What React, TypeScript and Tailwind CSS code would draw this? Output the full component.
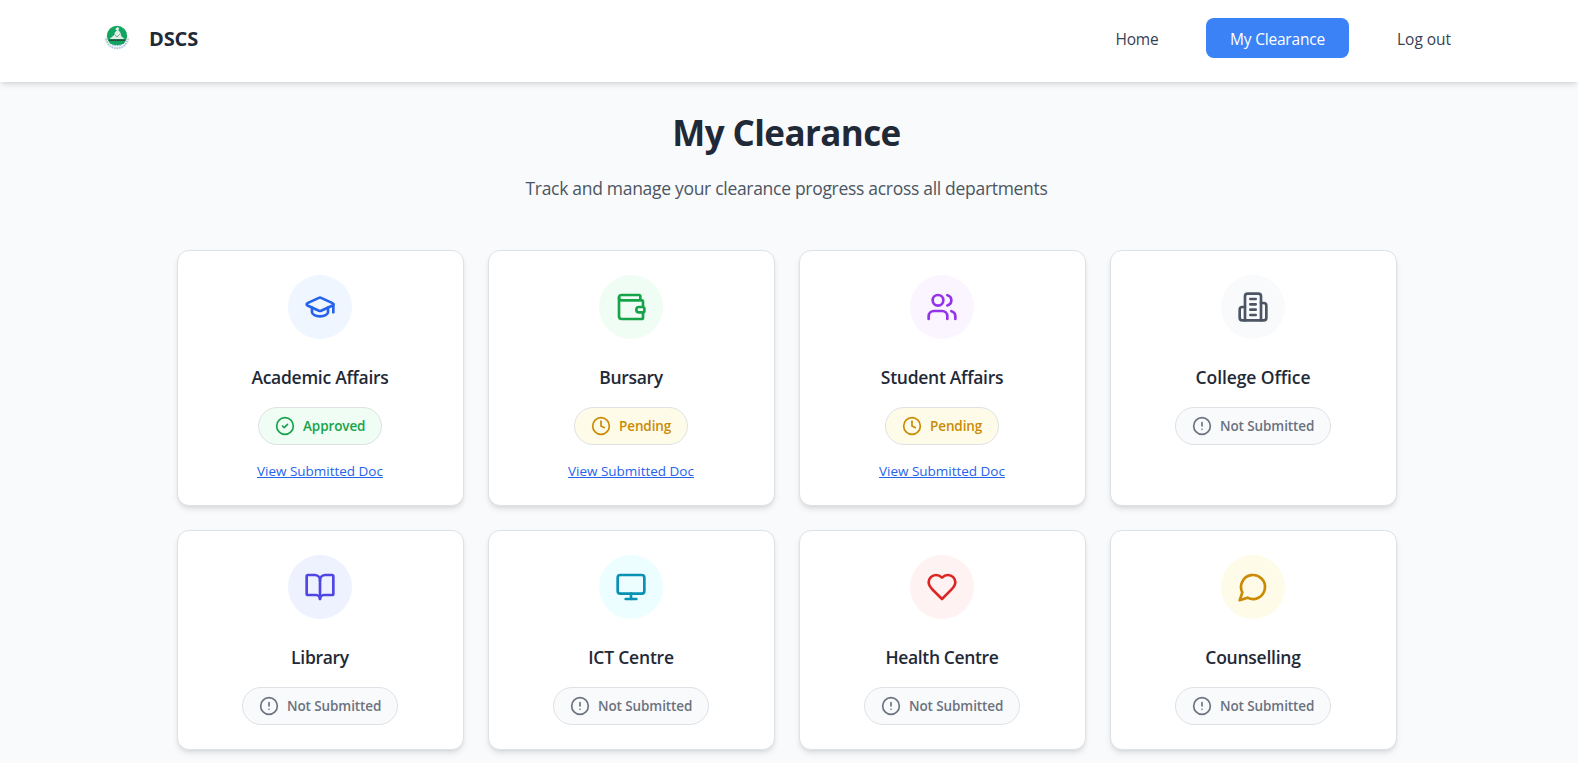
import React from "react";
import {
  BookOpen,
  CircleAlert,
  CircleCheck,
  Clock,
  GraduationCap,
  Monitor,
  Users,
  Wallet,
} from "lucide-react";

type Status = "approved" | "pending" | "none";

const strokeProps = {
  viewBox: "0 0 24 24",
  fill: "none",
  stroke: "currentColor",
  strokeWidth: 2,
  strokeLinecap: "round" as const,
  strokeLinejoin: "round" as const,
};

function Building({ className }: { className?: string }) {
  return (
    <svg {...strokeProps} className={className}>
      <path d="M6 22V4a2 2 0 0 1 2-2h8a2 2 0 0 1 2 2v18Z" />
      <path d="M6 12H4a2 2 0 0 0-2 2v6a2 2 0 0 0 2 2h2" />
      <path d="M18 9h2a2 2 0 0 1 2 2v9a2 2 0 0 1-2 2h-2" />
      <path d="M10 6h4" />
      <path d="M10 10h4" />
      <path d="M10 14h4" />
      <path d="M10 18h4" />
    </svg>
  );
}

function Heart({ className }: { className?: string }) {
  return (
    <svg {...strokeProps} className={className}>
      <path d="M19 14c1.49-1.46 3-3.21 3-5.5A5.5 5.5 0 0 0 16.5 3c-1.76 0-3 .5-4.5 2-1.5-1.5-2.74-2-4.5-2A5.5 5.5 0 0 0 2 8.5c0 2.3 1.5 4.05 3 5.5l7 7Z" />
    </svg>
  );
}

function Chat({ className }: { className?: string }) {
  return (
    <svg {...strokeProps} className={className}>
      <path d="M7.9 20A9 9 0 1 0 4 16.1L2 22Z" />
    </svg>
  );
}

function Logo() {
  return (
    <svg viewBox="0 0 26 26" className="size-[26px]">
      <circle cx="13" cy="11" r="10.2" fill="#12a560" />
      <path d="M13.500 2l1.800 1.200-1 1.800 2 2.500 1 3.500H9.800l1-3.500 2-2-1.600-1.500z" fill="#dfeee6" />
      <path d="M5.500 14l4-3.500 3.500 1 3.500-1 4 3.500z" fill="#e3ece7" />
      <path d="M10 9l3 3 3-3" fill="none" stroke="#5d9c7d" strokeWidth="0.700" />
      <path d="M5 15.200h16" stroke="#2b4a3d" strokeWidth="1.500" />
      <path d="M1.600 12.500c.4 6 5 10.700 11.400 10.700s11-4.700 11.400-10.700" fill="none" stroke="#e8ecee" strokeWidth="2.600" />
      <path d="M2 14c1.400 5.500 5.700 9.200 11 9.200s9.600-3.700 11-9.200" fill="none" stroke="#a3bed3" strokeWidth="1.400" strokeDasharray="1.300 1.200" />
      <path d="M5.500 18.400c4 2 11 2 15 0l-1.500 2.400c-3.500 1.700-8.500 1.700-12 0z" fill="#edf5fa" />
      <path d="M8 19.800c3 1 7 1 10 0" fill="none" stroke="#6fa8d0" strokeWidth="0.900" strokeDasharray="1.500 1" />
    </svg>
  );
}

const statuses = {
  approved: { label: "Approved", Icon: CircleCheck, pill: "w-[124px] bg-green-50 text-[#16a34a]" },
  pending: { label: "Pending", Icon: Clock, pill: "w-[114px] bg-yellow-50 text-[#ca8a04]" },
  none: { label: "Not Submitted", Icon: CircleAlert, pill: "w-[156px] bg-[#f9fafb] text-[#6b7280]" },
};

const departments: {
  name: string;
  Icon: React.ComponentType<{ className?: string }>;
  tone: string;
  title: string;
  status: Status;
}[] = [
  { name: "Academic Affairs", Icon: GraduationCap, tone: "bg-[#eff6ff] text-[#2563eb]", title: "tracking-[-0.270px]", status: "approved" },
  { name: "Bursary", Icon: Wallet, tone: "bg-[#f0fdf4] text-[#16a34a]", title: "tracking-[-0.300px]", status: "pending" },
  { name: "Student Affairs", Icon: Users, tone: "bg-[#faf5ff] text-[#9333ea]", title: "tracking-[-0.280px]", status: "pending" },
  { name: "College Office", Icon: Building, tone: "bg-[#f9fafb] text-[#4b5563]", title: "tracking-[-0.080px]", status: "none" },
  { name: "Library", Icon: BookOpen, tone: "bg-[#eef2ff] text-[#4f46e5]", title: "tracking-[-0.300px]", status: "none" },
  { name: "ICT Centre", Icon: Monitor, tone: "bg-[#ecfeff] text-[#0891b2]", title: "tracking-[-0.200px]", status: "none" },
  { name: "Health Centre", Icon: Heart, tone: "bg-[#fef2f2] text-[#dc2626]", title: "tracking-[-0.370px]", status: "none" },
  { name: "Counselling", Icon: Chat, tone: "bg-[#fefce8] text-[#ca8a04]", title: "tracking-[-0.250px]", status: "none" },
];

function StatusPill({ status }: { status: Status }) {
  const { label, Icon, pill } = statuses[status];
  return (
    <div className={`flex h-[38px] items-center gap-2 whitespace-nowrap rounded-full border border-[#dee2e6] pl-4 ${pill}`}>
      <Icon className="size-5 shrink-0" strokeWidth={2} />
      <span className="text-[13.500px] font-semibold leading-5 tracking-[-0.100px]">{label}</span>
    </div>
  );
}

export default function App() {
  return (
    <div className="h-[763px] overflow-hidden bg-[#f9fafb] font-['Open_Sans','Noto_Sans',sans-serif] text-[#1f2937]">
      <header className="h-[82px] bg-white pl-[104px] pr-[103px] pt-[18px] shadow-md">
        <div className="flex h-10 items-center justify-between">
          <div className="flex items-center gap-[19px]">
            <Logo />
            <span className="pt-px text-[20px] font-bold leading-7 tracking-[-0.100px]">DSCS</span>
          </div>
          <nav className="flex items-center gap-6 whitespace-nowrap text-[15.500px] leading-6 tracking-[-0.150px] text-[#374151]">
            <a className="flex h-10 w-[90px] items-center justify-center pt-px">Home</a>
            <a className="flex h-10 w-[143px] items-center justify-center rounded-lg bg-[#3b82f6] pt-px tracking-[-0.200px] text-white">My Clearance</a>
            <a className="flex h-10 w-[102px] items-center justify-center pt-px tracking-[-0.050px]">Log out</a>
          </nav>
        </div>
      </header>
      <main className="mr-[5px] flex flex-col items-center pt-[31px]">
        <h1 className="text-[35px] font-bold leading-10 tracking-[-0.600px]">My Clearance</h1>
        <p className="mt-[21px] text-[17.500px] leading-7 tracking-[-0.300px] text-[#4b5563]">
          Track and manage your clearance progress across all departments
        </p>
        <div className="mt-12 grid w-[1220px] grid-cols-4 gap-6">
          {departments.map(({ name, Icon, tone, title, status }) => (
            <section
              key={name}
              className="flex flex-col items-center rounded-xl border border-[#dee2e6] bg-white p-6 shadow-md"
            >
              <div className={`flex size-16 items-center justify-center rounded-full ${tone}`}>
                <Icon className="size-8" />
              </div>
              <h2 className={`mb-4 mt-6 text-[17.500px] font-semibold leading-7 ${title}`}>{name}</h2>
              <StatusPill status={status} />
              {status !== "none" && (
                <a className="mt-4 text-[13.500px] leading-5 tracking-[-0.020px] text-[#2563eb] underline">View Submitted Doc</a>
              )}
            </section>
          ))}
        </div>
      </main>
    </div>
  );
}
